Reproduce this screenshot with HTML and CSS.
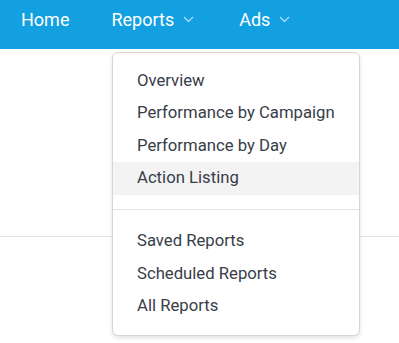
FILE: index.html
```html
<!DOCTYPE html>
<html>
<head>
<meta charset="utf-8">
<link rel="stylesheet" href="styles.css">
</head>
<body>
<nav class="topbar">
  <a class="nav-item">Home</a>
  <a class="nav-item">Reports <svg class="chev" width="11" height="7" viewBox="0 0 11 7"><polyline points="1,1 5.5,5.5 10,1"/></svg></a>
  <a class="nav-item">Ads <svg class="chev" width="11" height="7" viewBox="0 0 11 7"><polyline points="1,1 5.5,5.5 10,1"/></svg></a>
</nav>
<div class="page">
  <div class="rule"></div>
</div>
<div class="menu">
  <div class="menu-item">Overview</div>
  <div class="menu-item">Performance by Campaign</div>
  <div class="menu-item">Performance by Day</div>
  <div class="menu-item active">Action Listing</div>
  <div class="divider"></div>
  <div class="menu-item">Saved Reports</div>
  <div class="menu-item">Scheduled Reports</div>
  <div class="menu-item">All Reports</div>
</div>
</body>
</html>
```
FILE: styles.css
```css
html, body {
  margin: 0;
  padding: 0;
  background: #fff;
  font-family: Roboto, "Liberation Sans", sans-serif;
  overflow: hidden;
}
.topbar {
  height: 49px;
  background: #12a0e0;
  display: flex;
  align-items: flex-start;
  padding: 8.5px 0 0 21px;
  box-sizing: border-box;
}
.nav-item {
  color: #fff;
  font-size: 18px;
  line-height: normal;
  display: flex;
  align-items: center;
  margin-right: 42px;
}
.nav-item:nth-child(2) { margin-right: 45px; }
.chev {
  margin-left: 9px;
  fill: none;
  stroke: rgba(255,255,255,0.65);
  stroke-width: 1.3;
}
.page {
  height: 294px;
}
.rule {
  margin-top: 187px;
  height: 1px;
  background: #e4e4e4;
}
.menu {
  position: absolute;
  top: 52px;
  left: 112px;
  width: 246px;
  background: #fff;
  border: 1px solid #d6d6d6;
  border-radius: 6px;
  box-shadow: 0 2px 4px rgba(0,0,0,0.12);
  padding: 11.5px 0 12px;
}
.menu-item {
  height: 32.5px;
  line-height: 32.5px;
  padding-left: 24px;
  font-size: 16.7px;
  color: #383d47;
}
.menu-item.active {
  background: #f3f3f4;
}
.divider {
  height: 1px;
  background: #e6e6e6;
  margin: 14px 0 15.5px;
}
```
